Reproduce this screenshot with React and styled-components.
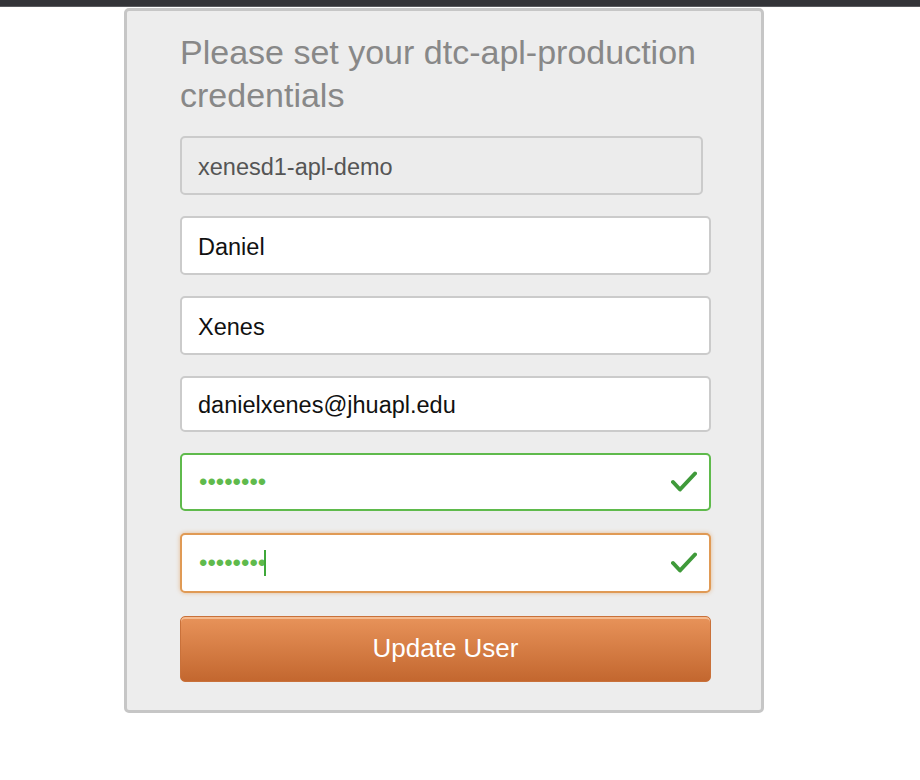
import React from 'react';
import styled, { createGlobalStyle } from 'styled-components';

const GlobalStyle = createGlobalStyle`
  html, body {
    margin: 0;
    padding: 0;
    background: #fff;
    font-family: 'Liberation Sans', Arial, sans-serif;
  }
`;

const TopBar = styled.div`
  height: 6px;
  background: #333438;
  border-bottom: 1px solid #5a5b5f;
`;

const Page = styled.div`
  padding: 1px 0 0 124px;
`;

const Card = styled.div`
  box-sizing: content-box;
  width: 531px;
  background: #ededed;
  border: 3px solid #c6c6c6;
  border-radius: 5px;
  padding: 20px 50px 28px 53px;
`;

const Title = styled.h2`
  margin: 0 0 19px 0;
  font-weight: normal;
  font-size: 34px;
  line-height: 43px;
  color: #888;
`;

const Form = styled.form`
  display: flex;
  flex-direction: column;
`;

const Field = styled.div`
  position: relative;
  height: ${(p) => p.$h || 59}px;
  width: ${(p) => p.$w || 531}px;
  margin-bottom: ${(p) => p.$mb ?? 21}px;
`;

const borderColors = {
  normal: '#cbcbcb',
  valid: '#5fba4c',
  focus: '#e09a55',
};

const Input = styled.input`
  box-sizing: border-box;
  width: 100%;
  height: 100%;
  margin: 0;
  padding: 3px 16px 0 16px;
  border: 2px solid ${(p) => borderColors[p.$state || 'normal']};
  border-radius: 5px;
  background: ${(p) => (p.disabled ? '#ececec' : '#fff')};
  color: ${(p) => (p.disabled ? '#555' : '#111')};
  -webkit-text-fill-color: ${(p) => (p.disabled ? '#555' : '#111')};
  opacity: 1;
  font-family: 'Liberation Sans', Arial, sans-serif;
  font-size: 23.5px;
  outline: none;
  box-shadow: ${(p) =>
    p.$state === 'focus' ? '0 0 4px rgba(224, 154, 85, 0.6)' : 'none'};
`;

const DotsInput = styled(Input)`
  padding: 0 16px 0 17px;
  color: #5fba4c;
  -webkit-text-fill-color: #5fba4c;
  font-size: 24px;
`;

const Check = styled.svg`
  position: absolute;
  right: 14px;
  top: 50%;
  margin-top: -11px;
  width: 26px;
  height: 22px;
`;

const Caret = styled.span`
  position: absolute;
  left: 84px;
  top: 17px;
  width: 2px;
  height: 26px;
  background: #3fa83a;
`;

const SubmitButton = styled.button`
  height: 66px;
  width: 531px;
  border: 1px solid #c9713a;
  border-radius: 5px;
  background: linear-gradient(#e8935a, #c3672f);
  box-shadow: inset 0 2px 0 rgba(255, 220, 190, 0.55);
  color: #fff;
  font-family: 'Liberation Sans', Arial, sans-serif;
  font-size: 26px;
  padding: 0 0 2px;
  cursor: pointer;
`;

const CheckIcon = () => (
  <Check viewBox="0 0 26 22">
    <path
      d="M2 11 L9 18.5 L24 2.5"
      fill="none"
      stroke="#3f9a3a"
      strokeWidth="4"
      strokeLinecap="round"
      strokeLinejoin="round"
    />
  </Check>
);

const App = () => {
  return (
    <>
      <GlobalStyle />
      <TopBar />
      <Page>
        <Card>
          <Title>Please set your dtc-apl-production credentials</Title>
          <Form onSubmit={(e) => e.preventDefault()}>
            <Field $w={523}>
              <Input disabled value="xenesd1-apl-demo" readOnly />
            </Field>
            <Field>
              <Input value="Daniel" readOnly />
            </Field>
            <Field>
              <Input value="Xenes" readOnly />
            </Field>
            <Field $h={56}>
              <Input value="danielxenes@jhuapl.edu" readOnly />
            </Field>
            <Field $h={58} $mb={22}>
              <DotsInput $state="valid" value="••••••••" readOnly />
              <CheckIcon />
            </Field>
            <Field $mb={23} $h={60}>
              <DotsInput $state="focus" value="••••••••" readOnly />
              <Caret />
              <CheckIcon />
            </Field>
            <SubmitButton type="submit">Update User</SubmitButton>
          </Form>
        </Card>
      </Page>
    </>
  );
};

export default App;
